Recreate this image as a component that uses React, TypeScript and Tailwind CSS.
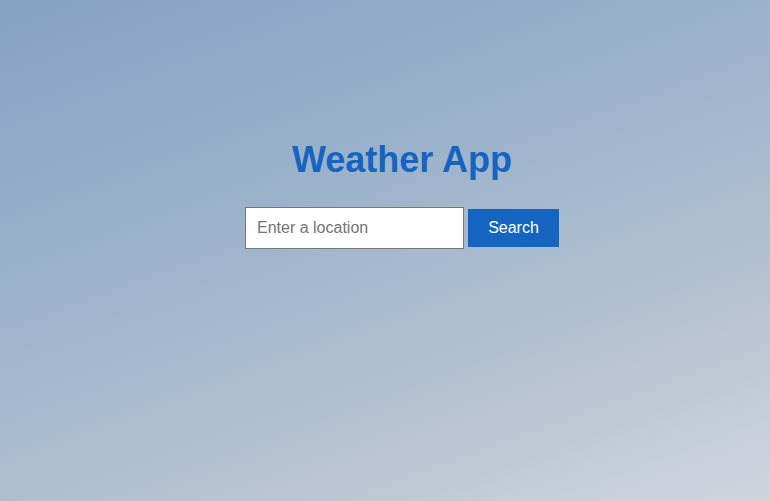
import React from "react";

export default function App() {
  return (
    <div
      className="w-[770px] h-[501px] overflow-hidden bg-[linear-gradient(160deg,#86a1c0_0%,#9db3cc_40%,#b3c1d1_70%,#d0d5dc_100%)]"
      style={{ fontFamily: '"Liberation Sans", Arial, sans-serif' }}
    >
      <div className="flex flex-col items-center pl-[34px] pt-[139px]">
        <h1 className="text-[36px] leading-[41px] font-bold text-[#1565c0]">Weather App</h1>
        <div className="mt-[27px] flex items-center gap-[4px]">
          <input
            type="text"
            placeholder="Enter a location"
            className="w-[219px] h-[42px] bg-white border border-[#767676] px-[11px] text-[16px] text-[#333] placeholder:text-[#757575] outline-none"
          />
          <button className="w-[91px] h-[38px] bg-[#1565c0] text-white text-[16px]">Search</button>
        </div>
      </div>
    </div>
  );
}
